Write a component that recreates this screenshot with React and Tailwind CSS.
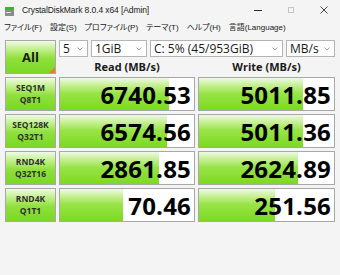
import React from "react";

const rows = [
  { l1: "SEQ1M", l2: "Q8T1", r: "6740.53", rw: 0.81, w: "5011.85", ww: 0.77 },
  { l1: "SEQ128K", l2: "Q32T1", r: "6574.56", rw: 0.8, w: "5011.36", ww: 0.77 },
  { l1: "RND4K", l2: "Q32T16", r: "2861.85", rw: 0.74, w: "2624.89", ww: 0.73 },
  { l1: "RND4K", l2: "Q1T1", r: "70.46", rw: 0.47, w: "251.56", ww: 0.56 },
];

const greenBox =
  "bg-[linear-gradient(to_bottom,#effbe6_0%,#c4f08e_25%,#8fe03c_55%,#7ad824_100%)]";

function Chevron() {
  return (
    <svg width="6" height="4" viewBox="0 0 6 4" className="shrink-0">
      <path d="M0.5 0.5 L3 3 L5.5 0.5" fill="none" stroke="#8a8a8a" strokeWidth="0.8" />
    </svg>
  );
}

function Select({ w, children }) {
  return (
    <div
      className={`${w} h-[17px] flex items-center justify-between border border-[#b4b4b4] bg-white pl-[3px] pr-[4px] text-[12px] leading-none text-[#1a1a1a]`}
    >
      <span>{children}</span>
      <Chevron />
    </div>
  );
}

function Value({ text, frac }) {
  return (
    <div className="relative h-[34px] border border-[#a8a8a8] bg-white overflow-hidden flex items-center justify-end pr-[3px]">
      <div
        className="absolute left-0 top-0 bottom-0 bg-[linear-gradient(to_bottom,#eef9e6_0%,#c8f096_22%,#98e448_48%,#7cd920_100%)]"
        style={{ width: `${frac * 100}%` }}
      />
      <span className="relative font-['Open_Sans',sans-serif] font-bold text-[24px] leading-none text-black pt-[2px] tracking-[0.2px]">
        {text}
      </span>
    </div>
  );
}

export default function App() {
  return (
    <div className="w-[340px] h-[275px] bg-[#f4f4f4] font-['Open_Sans','Noto_Sans_CJK_JP',sans-serif] text-[#1a1a1a] overflow-hidden">
      {/* Title bar */}
      <div className="h-[20px] flex items-center">
        <svg width="9" height="9" viewBox="0 0 9 9" className="ml-[5px] mt-[2px]">
          <rect x="0" y="0" width="9" height="3" fill="#3cb43c" />
          <rect x="0" y="3" width="9" height="6" fill="#8c8c8c" />
          <rect x="1" y="5" width="5" height="1" fill="#e0e0e0" />
        </svg>
        <span className="ml-[8px] font-['Liberation_Sans',sans-serif] text-[8.5px] leading-none tracking-[-0.1px] text-[#202020]">
          CrystalDiskMark 8.0.4 x64 [Admin]
        </span>
        <div className="ml-auto flex items-center h-full">
          <div className="w-[33px] flex justify-center">
            <div className="w-[8px] h-px bg-[#303030]" />
          </div>
          <div className="w-[33px] flex justify-center">
            <div className="w-[6px] h-[6px] border border-[#c4c4c4]" />
          </div>
          <div className="w-[33px] flex justify-center">
            <svg width="8" height="8" viewBox="0 0 8 8">
              <path d="M0.5 0.5 L7.5 7.5 M7.5 0.5 L0.5 7.5" stroke="#303030" strokeWidth="0.9" />
            </svg>
          </div>
        </div>
      </div>
      {/* Menu bar */}
      <div className="h-[15px] flex items-center pl-[4px] gap-[8px] text-[8px] leading-none text-[#202020] font-['Liberation_Sans','Noto_Sans_CJK_JP',sans-serif] [font-feature-settings:'palt']">
        <span>ファイル(F)</span>
        <span>設定(S)</span>
        <span>プロファイル(P)</span>
        <span>テーマ(T)</span>
        <span>ヘルプ(H)</span>
        <span>言語(Language)</span>
      </div>
      {/* Main */}
      <div className="mt-[5px] ml-[5px] grid grid-cols-[51px_136px_137px] gap-x-[3px] gap-y-[3px]">
        <div
          className={`relative h-[34px] border border-[#a8a8a8] ${greenBox} flex items-center justify-center`}
        >
          <span className="font-bold text-[13px] leading-none text-[#1a1a1a]">All</span>
          <svg width="6" height="6" viewBox="0 0 6 6" className="absolute right-0 bottom-0">
            <path d="M6 0 L6 6 L0 6 Z" fill="#f07c28" />
          </svg>
        </div>
        <div className="col-span-2 flex flex-col h-[34px]">
          <div className="flex gap-[3px]">
            <Select w="w-[29px]">5</Select>
            <Select w="w-[56px]">1GiB</Select>
            <Select w="w-[133px]">C: 5% (45/953GiB)</Select>
            <Select w="w-[49px]">MB/s</Select>
          </div>
          <div className="flex-1 grid grid-cols-[136px_137px] gap-x-[3px] items-center">
            <div className="text-center font-bold text-[11px] leading-none pt-[2px] text-[#1a1a1a]">Read (MB/s)</div>
            <div className="text-center font-bold text-[11px] leading-none pt-[2px] text-[#1a1a1a]">Write (MB/s)</div>
          </div>
        </div>
        {rows.map((r, i) => (
          <React.Fragment key={i}>
            <div
              className={`h-[34px] border border-[#a8a8a8] ${greenBox} flex flex-col items-center justify-center gap-[3px] font-bold text-[8.5px] leading-none text-[#303030]`}
            >
              <span>{r.l1}</span>
              <span>{r.l2}</span>
            </div>
            <Value text={r.r} frac={r.rw} />
            <Value text={r.w} frac={r.ww} />
          </React.Fragment>
        ))}
      </div>
    </div>
  );
}
